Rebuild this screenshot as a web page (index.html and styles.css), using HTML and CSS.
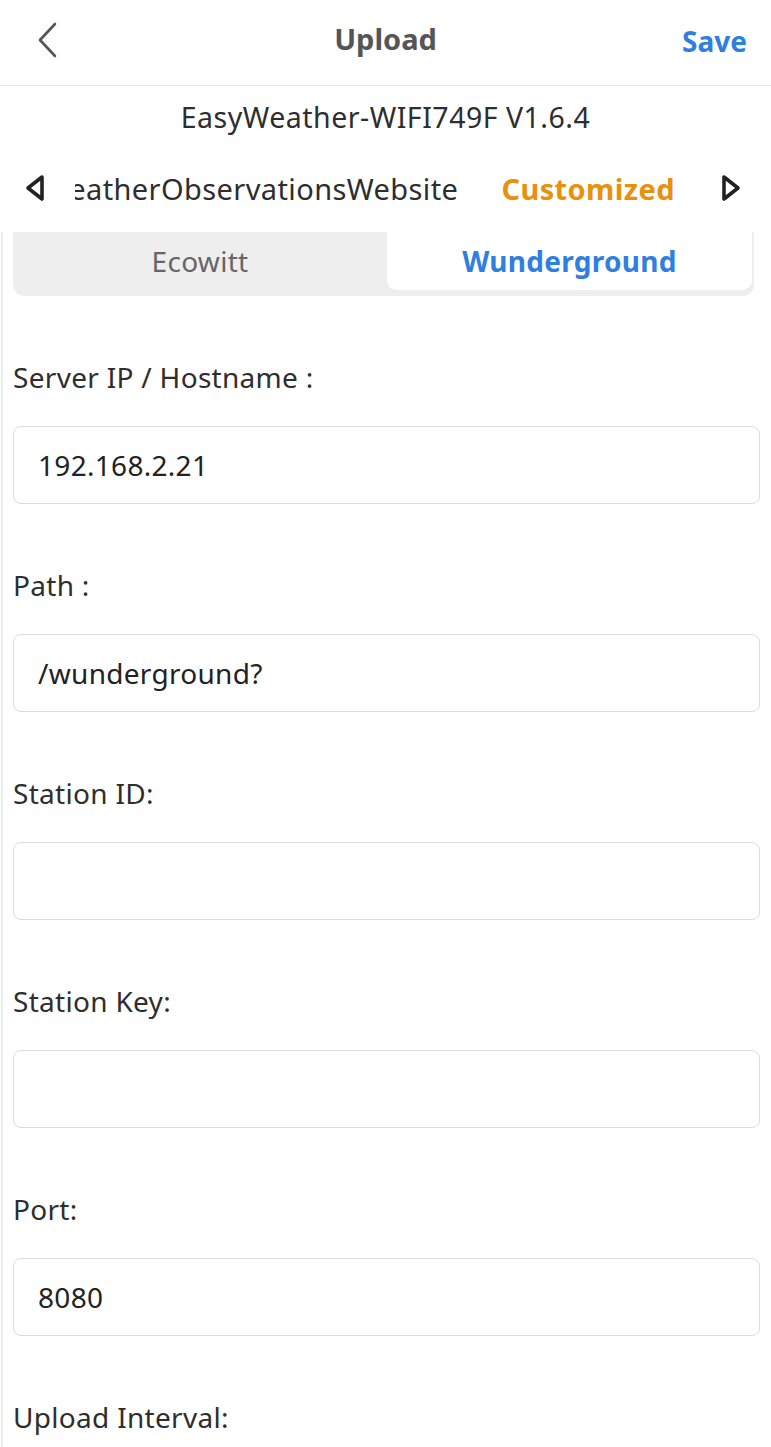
FILE: index.html
```html
<!DOCTYPE html>
<html>
<head>
<meta charset="utf-8">
<link rel="stylesheet" href="styles.css">
</head>
<body>
<div class="app">
  <header class="topbar">
    <svg class="back" width="24" height="40" viewBox="0 0 24 40"><path d="M19 3 L4 19 L19 35" fill="none" stroke="#555" stroke-width="2.6" stroke-linecap="round" stroke-linejoin="round"/></svg>
    <div class="title">Upload</div>
    <div class="save">Save</div>
  </header>
  <div class="device">EasyWeather-WIFI749F V1.6.4</div>
  <nav class="tabs">
    <svg class="arrow left" width="22" height="28" viewBox="0 0 22 28"><path d="M18 3 L4 14 L18 25 Z" fill="none" stroke="#222" stroke-width="3.6" stroke-linejoin="round"/></svg>
    <div class="tabtrack">
      <div class="tab">WeatherObservationsWebsite</div>
      <div class="tab active">Customized<span class="ind"></span></div>
    </div>
    <svg class="arrow right" width="22" height="28" viewBox="0 0 22 28"><path d="M4 3 L18 14 L4 25 Z" fill="none" stroke="#222" stroke-width="3.6" stroke-linejoin="round"/></svg>
  </nav>
  <main class="content">
    <div class="segment">
      <div class="seg">Ecowitt</div>
      <div class="seg on">Wunderground</div>
    </div>
    <div class="field">
      <div class="label">Server IP / Hostname :</div>
      <div class="input">192.168.2.21</div>
    </div>
    <div class="field">
      <div class="label">Path :</div>
      <div class="input">/wunderground?</div>
    </div>
    <div class="field">
      <div class="label">Station ID:</div>
      <div class="input"></div>
    </div>
    <div class="field">
      <div class="label">Station Key:</div>
      <div class="input"></div>
    </div>
    <div class="field">
      <div class="label">Port:</div>
      <div class="input">8080</div>
    </div>
    <div class="field">
      <div class="label">Upload Interval:</div>
    </div>
  </main>
</div>
</body>
</html>
```
FILE: styles.css
```css
* { box-sizing: border-box; }
html, body { margin: 0; padding: 0; background: #fff; }
body { font-family: "Noto Sans", "Open Sans", sans-serif; color: #333; }
.app { width: 771px; height: 1447px; overflow: hidden; }
.topbar {
  height: 86px;
  border-bottom: 1px solid #e8e8e8;
  display: flex;
  align-items: center;
  justify-content: space-between;
  padding: 0 24px 4px 36px;
  position: relative;
}
.back { display: block; }
.title {
  position: absolute; left: 0; right: 0; top: 19px; text-align: center;
  font-size: 29px; font-weight: 700; color: #555; pointer-events: none;
}
.save { font-size: 28px; font-weight: 700; color: #2f7fe3; }
.device {
  height: 62px; display: flex; align-items: center; justify-content: center;
  font-size: 28.5px; letter-spacing: 0.5px; color: #2e2e2e;
}
.tabs {
  height: 84px; display: flex; align-items: flex-start; padding-top: 16px;
  position: relative; background: #fff;
}
.arrow { flex: none; margin-top: 10px; }
.arrow.left { margin-left: 24px; }
.arrow.right { margin-left: 45px; }
.tabtrack {
  width: 600px; margin-left: 29px; display: flex; justify-content: flex-end;
  overflow: hidden; gap: 43px; white-space: nowrap;
}
.tab { font-size: 29px; letter-spacing: 0.4px; color: #2e2e2e; line-height: 50px; position: relative; flex: none; }
.tab.active { color: #e9900d; font-weight: 700; }
.ind {
  position: absolute; left: 50%; margin-left: -18px; top: 56px;
  width: 41px; height: 6px; border-radius: 3px; background: #e9900d;
}
.content {
  border-left: 2px solid #ececec;
  margin-left: 1px;
  padding: 0 10px 0 10px;
  height: 1215px;
}
.segment {
  display: flex; background: #eeeeee; height: 64px; border-radius: 0 0 12px 12px;
  padding: 0 2px 6px 0; width: 741px;
}
.seg { flex: 1; display: flex; align-items: center; justify-content: center; font-size: 28px; letter-spacing: 0.3px; color: #666; }
.seg:first-child { flex: 0 0 374px; }
.seg.on { background: #fff; color: #2f7fe3; font-weight: 700; border-radius: 0 0 10px 10px; }
.field { padding-top: 63px; }
.field + .field { padding-top: 63px; }
.label { font-size: 28px; letter-spacing: 0.3px; color: #2e2e2e; line-height: 36px; height: 36px; }
.input {
  margin-top: 31px; height: 78px; width: 747px; border: 1.5px solid #dcdcdc; border-radius: 8px;
  display: flex; align-items: center; padding-left: 24px; font-size: 28px; letter-spacing: 0.3px; color: #222;
}
```
